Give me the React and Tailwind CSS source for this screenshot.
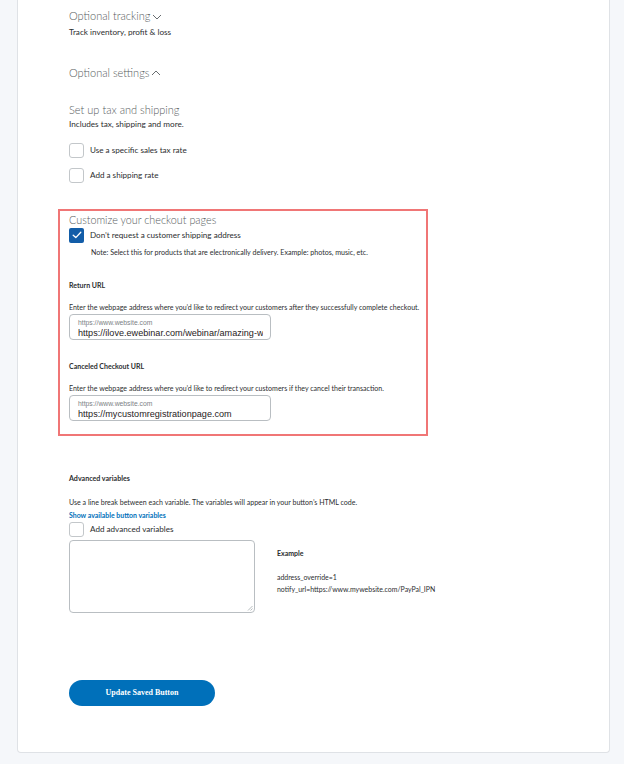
import React from "react";

const body = { fontFamily: "Lato, 'Open Sans', sans-serif" };

function Box({ checked }) {
  if (checked) {
    return (
      <div className="w-[15px] h-[15px] rounded-[2px] bg-[#125da8] flex items-center justify-center shrink-0">
        <svg width="10" height="8" viewBox="0 0 10 8" fill="none">
          <polyline points="1.2,4.2 3.8,6.6 8.8,1.2" stroke="white" strokeWidth="1.3" strokeLinecap="round" strokeLinejoin="round" />
        </svg>
      </div>
    );
  }
  return <div className="w-[15px] h-[15px] rounded-[3px] border border-[#c3c7ca] bg-white shrink-0" />;
}

function Input({ value }) {
  return (
    <div className="w-[202px] h-[26px] rounded-[4px] border border-[#b9bec2] bg-white pl-[8px] pr-[7px] flex flex-col">
      <div className="mt-[3px] h-[9px] leading-[9px] text-[6.8px] text-[#7c8286]" style={{ fontFamily: "'Liberation Sans', Arial, sans-serif" }}>
        https://www.website.com
      </div>
      <div className="h-[12px] leading-[12px] text-[9.1px] text-[#1f2223] whitespace-nowrap overflow-hidden" style={{ fontFamily: "'Liberation Sans', Arial, sans-serif" }}>
        {value}
      </div>
    </div>
  );
}

export default function App() {
  return (
    <div className="min-h-[764px] w-[624px] bg-[#f5f7fa]" style={body}>
      <div className="ml-[17px] w-[593px] h-[753px] bg-white border-l border-r border-b border-[#dfe2e6] rounded-b-[4px] pl-[51px]">
        {/* Optional tracking */}
        <div className="pt-[8px] h-[24px] flex items-center text-[11px] leading-[16px] text-[#575c60] font-light">
          <span>Optional tracking</span>
          <svg className="ml-[2px] mt-[1px]" width="10" height="6" viewBox="0 0 10 6" fill="none">
            <polyline points="1,1 5,5 9,1" stroke="#575c60" strokeWidth="0.9" />
          </svg>
        </div>
        <div className="mt-[2px] h-[12px] leading-[12px] text-[8.2px] text-[#2c2e2f]">Track inventory, profit &amp; loss</div>

        {/* Optional settings */}
        <div className="mt-[27px] h-[16px] flex items-center text-[11px] leading-[16px] text-[#575c60] font-light">
          <span>Optional settings</span>
          <svg className="ml-[2px] -mt-[1px]" width="10" height="6" viewBox="0 0 10 6" fill="none">
            <polyline points="1,5 5,1 9,5" stroke="#575c60" strokeWidth="0.9" />
          </svg>
        </div>

        <div className="mt-[21px] h-[16px] leading-[16px] text-[11px] text-[#575c60] font-light">Set up tax and shipping</div>
        <div className="h-[12px] leading-[12px] text-[8.2px] text-[#2c2e2f]">Includes tax, shipping and more.</div>

        <div className="mt-[12px] h-[16px] flex items-center gap-[6px]">
          <Box />
          <span className="text-[8.1px] text-[#2c2e2f]">Use a specific sales tax rate</span>
        </div>
        <div className="mt-[9px] h-[16px] flex items-center gap-[6px]">
          <Box />
          <span className="text-[8.1px] text-[#2c2e2f]">Add a shipping rate</span>
        </div>

        {/* Highlighted box */}
        <div className="mt-[26px] -ml-[11px] w-[370px] border-2 border-[#f07676] pl-[9px] pb-[13px]">
          <div className="mt-[2px] h-[14px] leading-[14px] text-[10.8px] text-[#575c60] font-light">Customize your checkout pages</div>
          <div className="h-[16px] flex items-center gap-[6px]">
            <Box checked />
            <span className="text-[8.1px] text-[#2c2e2f]">Don’t request a customer shipping address</span>
          </div>
          <div className="mt-[4px] ml-[22px] h-[11px] leading-[11px] text-[7.1px] text-[#2c2e2f]">
            Note: Select this for products that are electronically delivery. Example: photos, music, etc.
          </div>

          <div className="mt-[21px] h-[12px] leading-[12px] text-[7px] font-bold text-[#2c2e2f]">Return URL</div>
          <div className="mt-[11px] h-[12px] leading-[12px] text-[7.05px] text-[#2c2e2f] whitespace-nowrap">
            Enter the webpage address where you’d like to redirect your customers after they successfully complete checkout.
          </div>
          <Input value="https://ilove.ewebinar.com/webinar/amazing-webinar" />

          <div className="mt-[20px] h-[12px] leading-[12px] text-[7px] font-bold text-[#2c2e2f]">Canceled Checkout URL</div>
          <div className="mt-[11px] h-[12px] leading-[12px] text-[7.05px] text-[#2c2e2f] whitespace-nowrap">
            Enter the webpage address where you’d like to redirect your customers if they cancel their transaction.
          </div>
          <Input value="https://mycustomregistrationpage.com" />
        </div>

        {/* Advanced variables */}
        <div className="mt-[37px] h-[12px] leading-[12px] text-[7.1px] font-bold text-[#2c2e2f]">Advanced variables</div>
        <div className="mt-[12px] h-[12px] leading-[12px] text-[7.05px] text-[#2c2e2f]">
          Use a line break between each variable. The variables will appear in your button’s HTML code.
        </div>
        <div className="h-[12px] leading-[12px] text-[6.95px] font-bold text-[#0070ba]">Show available button variables</div>
        <div className="h-[16px] flex items-center gap-[6px]">
          <Box />
          <span className="text-[8.1px] text-[#2c2e2f]">Add advanced variables</span>
        </div>

        <div className="mt-[3px] flex gap-[22px]">
          <div className="relative w-[186px] h-[73px] rounded-[4px] border border-[#b9bec2] bg-white">
            <svg className="absolute right-[1px] bottom-[1px]" width="6" height="6" viewBox="0 0 6 6">
              <line x1="5.5" y1="1" x2="1" y2="5.5" stroke="#9aa0a4" strokeWidth="0.7" />
              <line x1="5.5" y1="3.5" x2="3.5" y2="5.5" stroke="#9aa0a4" strokeWidth="0.7" />
            </svg>
          </div>
          <div className="flex flex-col">
            <div className="mt-[7px] h-[12px] leading-[12px] text-[7px] font-bold text-[#2c2e2f]">Example</div>
            <div className="mt-[12px] h-[12px] leading-[12px] text-[6.95px] text-[#2c2e2f]">address_override=1</div>
            <div className="h-[12px] leading-[12px] text-[6.95px] text-[#2c2e2f]">notify_url=https://www.mywebsite.com/PayPal_IPN</div>
          </div>
        </div>

        <button
          className="mt-[67px] w-[146px] h-[26px] rounded-full bg-[#0070ba] text-white text-[8px] font-bold"
          style={{ fontFamily: "'Liberation Serif', 'Times New Roman', serif" }}
        >
          Update Saved Button
        </button>
      </div>
    </div>
  );
}
